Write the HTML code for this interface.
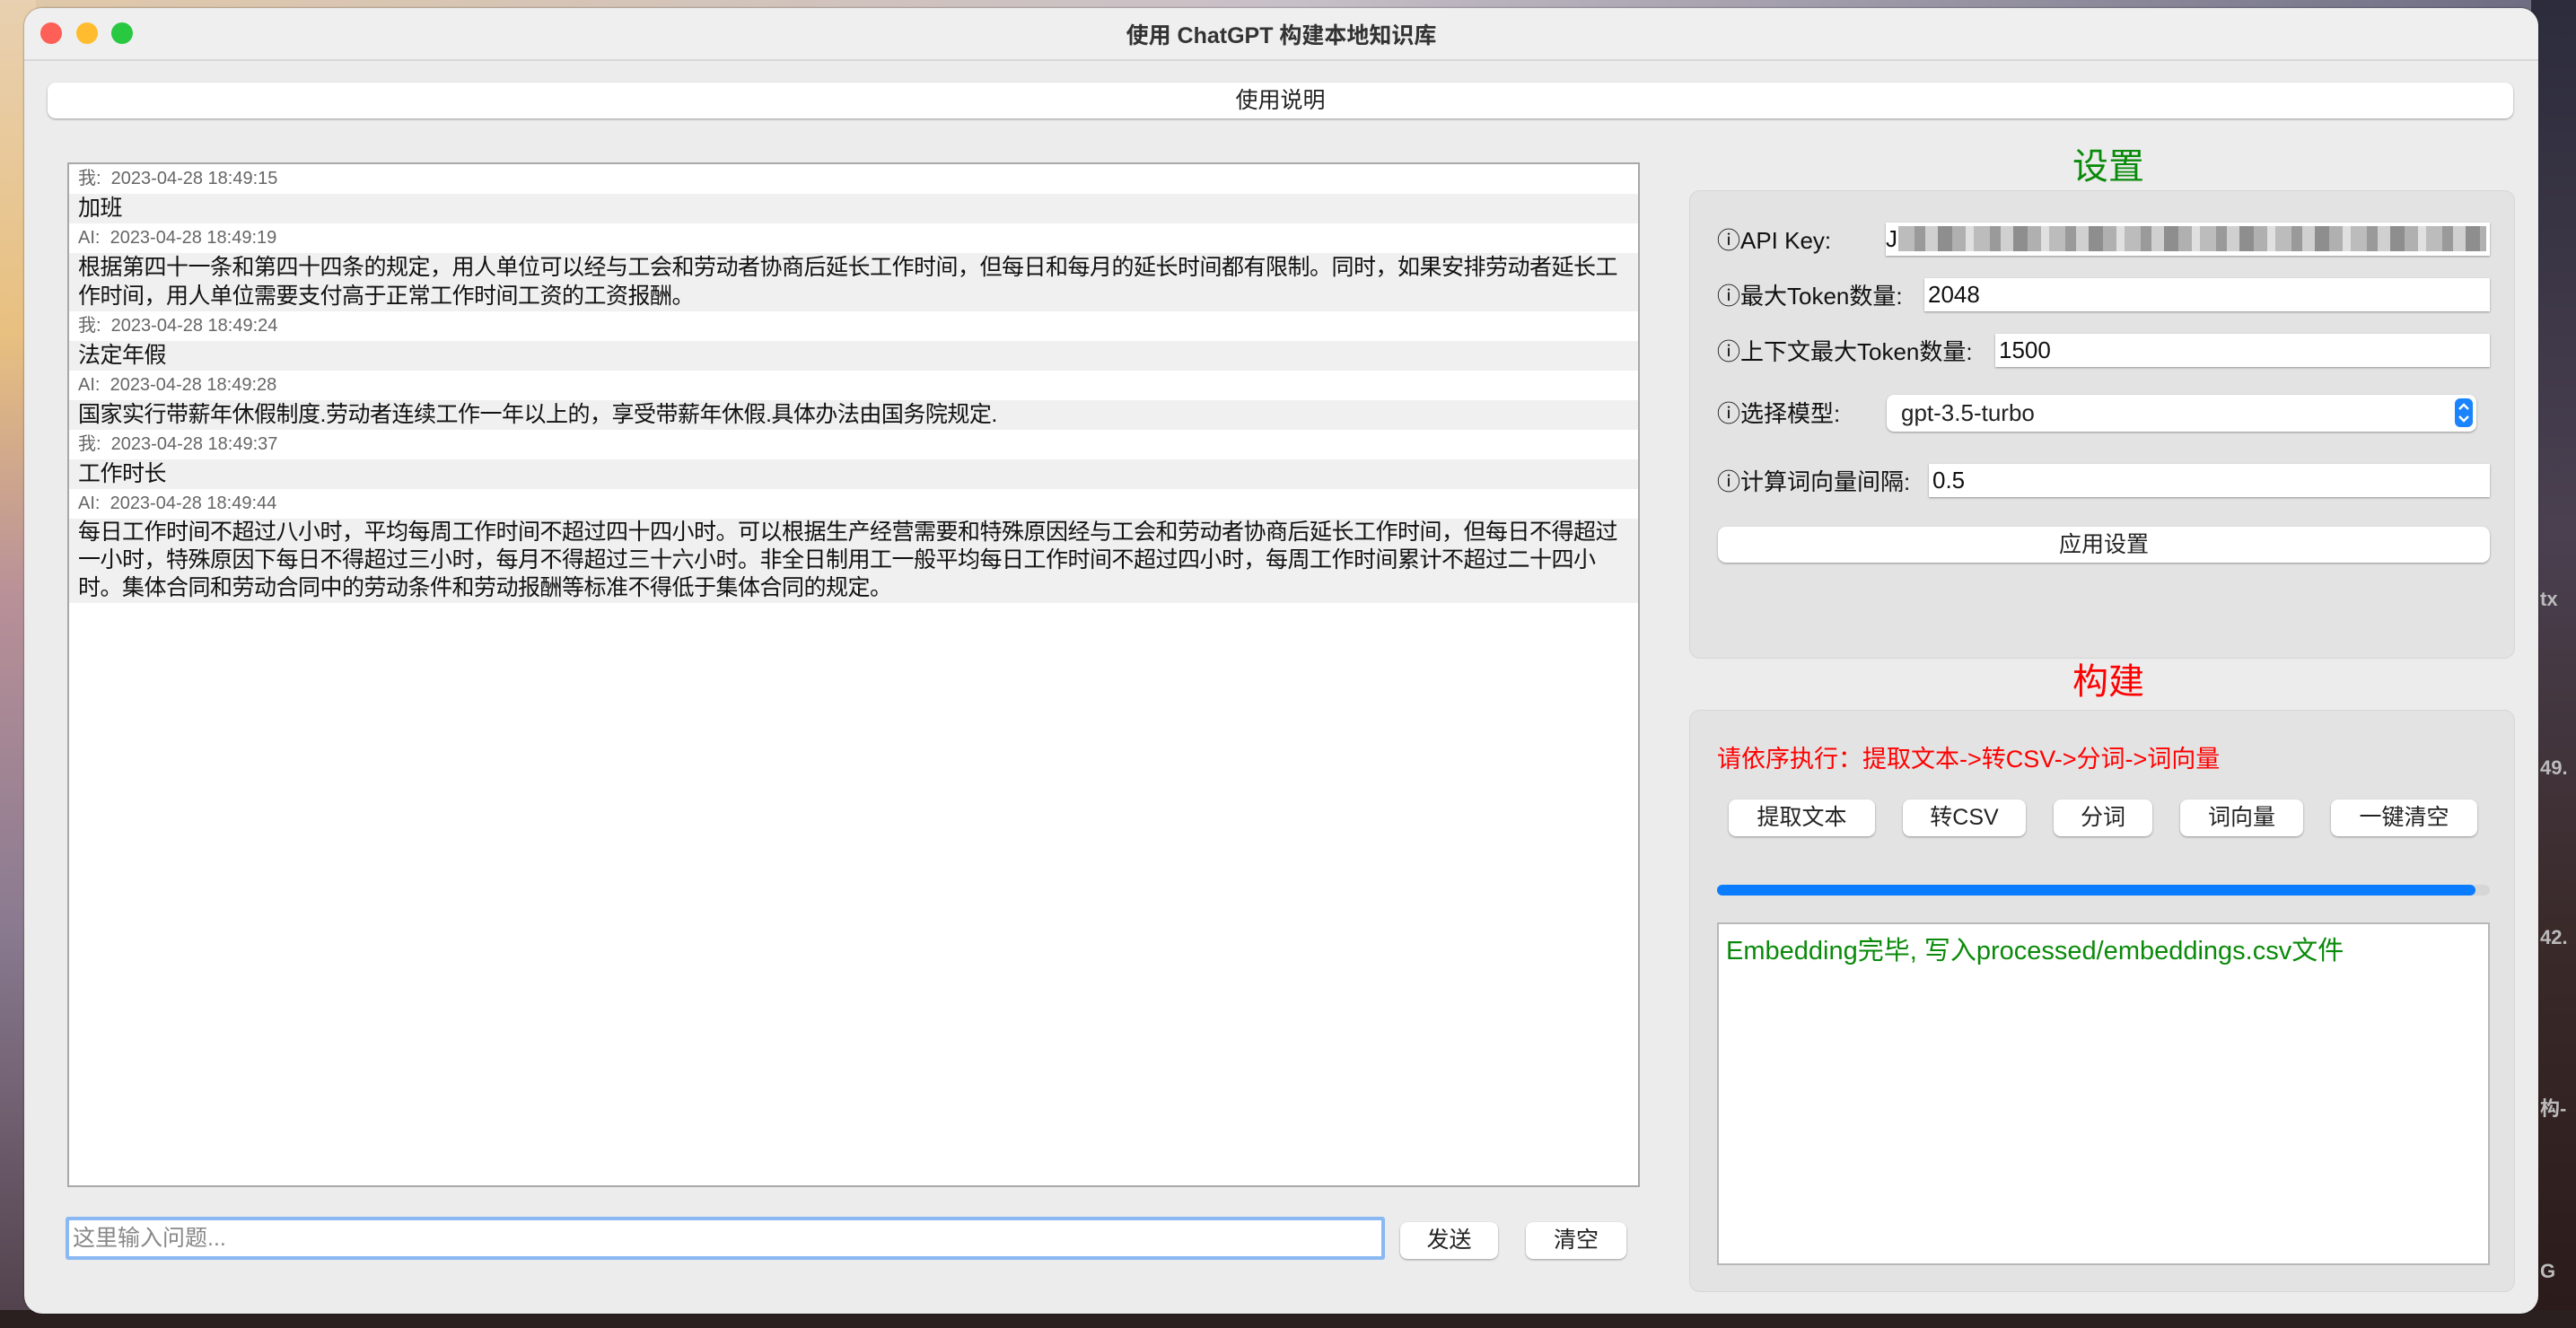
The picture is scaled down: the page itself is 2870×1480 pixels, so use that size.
<!DOCTYPE html>
<html><head><meta charset="utf-8"><style>
*{margin:0;padding:0;box-sizing:border-box}
body{width:2870px;height:1480px;overflow:hidden;position:relative;font-family:"Liberation Sans","Noto Sans CJK SC",sans-serif;background:linear-gradient(90deg,#d9b48a 0,#b99098 1%,#3a2e34 97%,#2a2228 100%)}
.bgl{position:absolute;left:0;top:0;width:40px;height:1480px;background:linear-gradient(180deg,#e8d0b0 0,#e8c080 25%,#b89098 45%,#8a7a90 70%,#50404a 100%)}
.bgt{position:absolute;left:0;top:0;width:2870px;height:12px;background:linear-gradient(90deg,#e0c8a8,#c8c0c8 50%,#6a6a80 100%)}
.bgr{position:absolute;left:2820px;top:0;width:50px;height:1480px;background:linear-gradient(180deg,#2c2c3c 0,#4a4050 40%,#3a2a2a 70%,#2a1a1a 100%)}
.bgb{position:absolute;left:0;top:1460px;width:2870px;height:20px;background:#2a2020}
.win{position:absolute;left:27px;top:9px;width:2801px;height:1455px;background:#ececec;border-radius:20px;overflow:hidden;box-shadow:0 0 2px rgba(0,0,0,.5)}
.tb{position:absolute;left:0;top:0;width:100%;height:59px;background:#efefef;border-bottom:2px solid #d8d8d8}
.dot{position:absolute;top:16px;width:24px;height:24px;border-radius:50%}
.title{position:absolute;left:0;width:100%;top:11px;text-align:center;font-size:25px;font-weight:bold;color:#333}
.abs{position:absolute}
.btn{position:absolute;background:#fff;border-radius:9px;box-shadow:0 1px 2px rgba(0,0,0,.35);text-align:center;color:#222;font-size:25px}
.chat{position:absolute;left:48px;top:172px;width:1752px;height:1142px;background:#fff;border:2px solid #a8a8a8;overflow:hidden}
.m{height:33px;line-height:33px;font-size:20px;color:#666;padding-left:10px;background:#fff;white-space:nowrap}
.c{line-height:32px;padding:0 0 1px 10px;font-size:25px;color:#111;background:#f0f0f0;white-space:nowrap;letter-spacing:-0.5px}
.panel{position:absolute;left:1855px;background:#e3e3e3;border:1px solid #d6d6d6;border-radius:12px;width:920px}
.lbl{position:absolute;font-size:26px;color:#111;white-space:nowrap}
.fld{position:absolute;background:#fff;box-shadow:0 1px 2px rgba(0,0,0,.35);font-size:26px;padding-left:4px;color:#111}
.sb{position:absolute;background:#fff;border-radius:8px;box-shadow:0 1px 2px rgba(0,0,0,.35);font-size:25px;color:#222;text-align:center;line-height:41px;height:41px}
.frag{position:absolute;left:2830px;color:#bbb;font-size:22px;font-weight:bold}
</style></head><body>
<div class="bgt"></div><div class="bgl"></div><div class="bgr"></div><div class="bgb"></div>
<div class="frag" style="top:655px">tx</div>
<div class="frag" style="top:843px">49.</div>
<div class="frag" style="top:1032px">42.</div>
<div class="frag" style="top:1218px">构-</div>
<div class="frag" style="top:1404px">G</div>
<div class="win">
 <div class="tb">
  <div class="dot" style="left:18px;background:#fe5f57"></div>
  <div class="dot" style="left:58px;background:#febc2e"></div>
  <div class="dot" style="left:97px;background:#28c840"></div>
  <div class="title">使用 ChatGPT 构建本地知识库</div>
 </div>
 <div class="btn" style="left:26px;top:83px;width:2747px;height:40px;line-height:40px">使用说明</div>
 <div class="chat">
  <div class="m">我:&nbsp; 2023-04-28 18:49:15</div>
  <div class="c">加班</div>
  <div class="m">AI:&nbsp; 2023-04-28 18:49:19</div>
  <div class="c">根据第四十一条和第四十四条的规定，用人单位可以经与工会和劳动者协商后延长工作时间，但每日和每月的延长时间都有限制。同时，如果安排劳动者延长工<br>作时间，用人单位需要支付高于正常工作时间工资的工资报酬。</div>
  <div class="m">我:&nbsp; 2023-04-28 18:49:24</div>
  <div class="c">法定年假</div>
  <div class="m">AI:&nbsp; 2023-04-28 18:49:28</div>
  <div class="c">国家实行带薪年休假制度.劳动者连续工作一年以上的，享受带薪年休假.具体办法由国务院规定.</div>
  <div class="m">我:&nbsp; 2023-04-28 18:49:37</div>
  <div class="c">工作时长</div>
  <div class="m">AI:&nbsp; 2023-04-28 18:49:44</div>
  <div class="c" style="line-height:31px">每日工作时间不超过八小时，平均每周工作时间不超过四十四小时。可以根据生产经营需要和特殊原因经与工会和劳动者协商后延长工作时间，但每日不得超过<br>一小时，特殊原因下每日不得超过三小时，每月不得超过三十六小时。非全日制用工一般平均每日工作时间不超过四小时，每周工作时间累计不超过二十四小<br>时。集体合同和劳动合同中的劳动条件和劳动报酬等标准不得低于集体合同的规定。</div>
 </div>
 <div class="abs" style="left:46px;top:1347px;width:1470px;height:48px;background:#fff;border:4px solid #8ab8f2;border-radius:3px;font-size:25px;color:#888;line-height:40px;padding-left:4px">这里输入问题...</div>
 <div class="sb" style="left:1533px;top:1353px;width:109px">发送</div>
 <div class="sb" style="left:1673px;top:1353px;width:112px">清空</div>

 <div class="abs" style="left:1862px;width:920px;top:144px;text-align:center;font-size:40px;color:#0a8a0a">设置</div>
 <div class="panel" style="top:203px;height:522px">
  <div class="lbl" style="left:30px;top:35px">ⓘAPI Key:</div>
  <div class="fld" style="left:218px;top:35px;width:673px;height:37px;overflow:hidden"><div style="position:absolute;left:0;top:0;font-size:26px;line-height:37px">J</div><div style="position:absolute;left:14px;top:4px;width:655px;height:28px;background:repeating-linear-gradient(90deg,#bcbcbc 0 18px,#9a9a9a 18px 30px,#d0d0d0 30px 44px,#8e8e8e 44px 60px,#b0b0b0 60px 75px,#e0e0e0 75px 84px)"></div></div>
  <div class="lbl" style="left:30px;top:97px">ⓘ最大Token数量:</div>
  <div class="fld" style="left:261px;top:97px;width:630px;height:37px;line-height:37px">2048</div>
  <div class="lbl" style="left:30px;top:159px">ⓘ上下文最大Token数量:</div>
  <div class="fld" style="left:340px;top:159px;width:551px;height:37px;line-height:37px">1500</div>
  <div class="lbl" style="left:30px;top:228px">ⓘ选择模型:</div>
  <div class="fld" style="left:219px;top:227px;width:657px;height:41px;line-height:41px;border-radius:8px;padding-left:16px;color:#222">gpt-3.5-turbo
   <div style="position:absolute;right:4px;top:4px;width:20px;height:32px;background:#1a84ff;border-radius:6px"><svg width="20" height="32" viewBox="0 0 20 32"><path d="M5 12 L10 7 L15 12 M5 20 L10 25 L15 20" stroke="#fff" stroke-width="2.4" fill="none"/></svg></div></div>
  <div class="lbl" style="left:30px;top:304px">ⓘ计算词向量间隔:</div>
  <div class="fld" style="left:266px;top:304px;width:625px;height:37px;line-height:37px">0.5</div>
  <div class="btn" style="left:31px;top:374px;width:860px;height:40px;line-height:40px">应用设置</div>
 </div>
 <div class="abs" style="left:1862px;width:920px;top:718px;text-align:center;font-size:40px;color:#f00">构建</div>
 <div class="panel" style="top:782px;height:649px">
  <div class="lbl" style="left:30px;top:32px;font-size:27px;color:#f00">请依序执行：提取文本->转CSV->分词->词向量</div>
  <div class="sb" style="left:43px;top:99px;width:163px">提取文本</div>
  <div class="sb" style="left:237px;top:99px;width:137px">转CSV</div>
  <div class="sb" style="left:405px;top:99px;width:110px">分词</div>
  <div class="sb" style="left:546px;top:99px;width:137px">词向量</div>
  <div class="sb" style="left:714px;top:99px;width:163px">一键清空</div>
  <div class="abs" style="left:30px;top:194px;width:861px;height:12px;border-radius:6px;background:#d6d6d6"><div style="width:845px;height:12px;border-radius:6px;background:#0a7cff"></div></div>
  <div class="abs" style="left:30px;top:236px;width:861px;height:382px;background:#fff;border:2px solid #b8b8b8;font-size:29px;color:#0a8a0a;padding:6px 8px;white-space:nowrap">Embedding完毕, 写入processed/embeddings.csv文件</div>
 </div>
</div>
</body></html>
